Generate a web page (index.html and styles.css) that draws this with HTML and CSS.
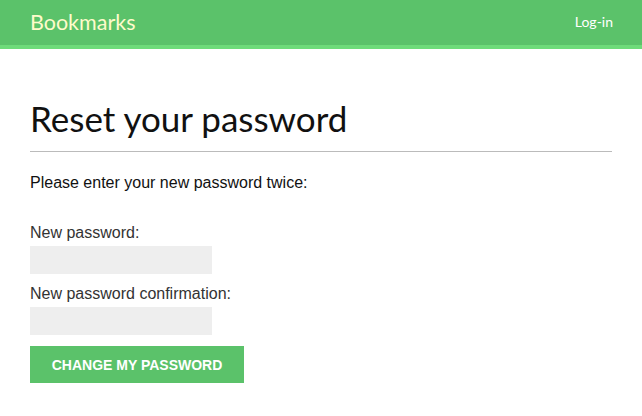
FILE: index.html
```html
<!DOCTYPE html>
<html>
<head>
<meta charset="utf-8">
<link rel="stylesheet" href="styles.css">
</head>
<body>
<header class="header">
  <span class="logo">Bookmarks</span>
  <a class="login" href="#">Log-in</a>
</header>
<main class="content">
  <h1 class="title">Reset your password</h1>
  <p class="intro">Please enter your new password twice:</p>
  <form class="form">
    <label class="label">New password:</label>
    <input class="field" type="password">
    <label class="label">New password confirmation:</label>
    <input class="field" type="password">
    <button class="btn" type="button">Change my password</button>
  </form>
</main>
</body>
</html>
```
FILE: styles.css
```css
html, body { margin: 0; padding: 0; background: #fff; }
body { font-family: "Liberation Sans", Arial, sans-serif; color: #222; }
.header {
  height: 45px;
  background: #5bc26a;
  border-bottom: 4px solid #6edb7a;
  display: flex;
  align-items: center;
  justify-content: space-between;
  padding: 0 29px 0 30px;
}
.logo {
  font-family: "Lato", sans-serif;
  font-size: 21.5px;
  color: #fffbcb;
  position: relative;
  top: -1px;
}
.login {
  font-family: "Lato", sans-serif;
  font-size: 14px;
  color: #fff;
  text-decoration: none;
  position: relative;
  top: -1px;
}
.content { padding: 0 30px; }
.title {
  font-family: "Lato", sans-serif;
  font-weight: 400;
  font-size: 35px;
  color: #111;
  margin: 49px 0 0;
  padding-bottom: 13px;
  border-bottom: 1px solid #bbb;
  line-height: 40px;
}
.intro {
  font-size: 16px;
  line-height: 18px;
  margin: 22px 0 0;
  color: #111;
}
.form { display: flex; flex-direction: column; align-items: flex-start; margin-top: 31px; }
.label { font-size: 16px; color: #333; line-height: 19px; margin-bottom: 4px; }
.field {
  width: 182px;
  height: 28px;
  box-sizing: border-box;
  border: none;
  background: #eee;
  margin: 0 0 10px;
}
.btn {
  margin-top: 1px;
  width: 214px;
  height: 37px;
  border: none;
  background: #5bc26a;
  color: #fff;
  font-family: "Liberation Sans", Arial, sans-serif;
  font-weight: bold;
  font-size: 14px;
  text-transform: uppercase;
}
```
